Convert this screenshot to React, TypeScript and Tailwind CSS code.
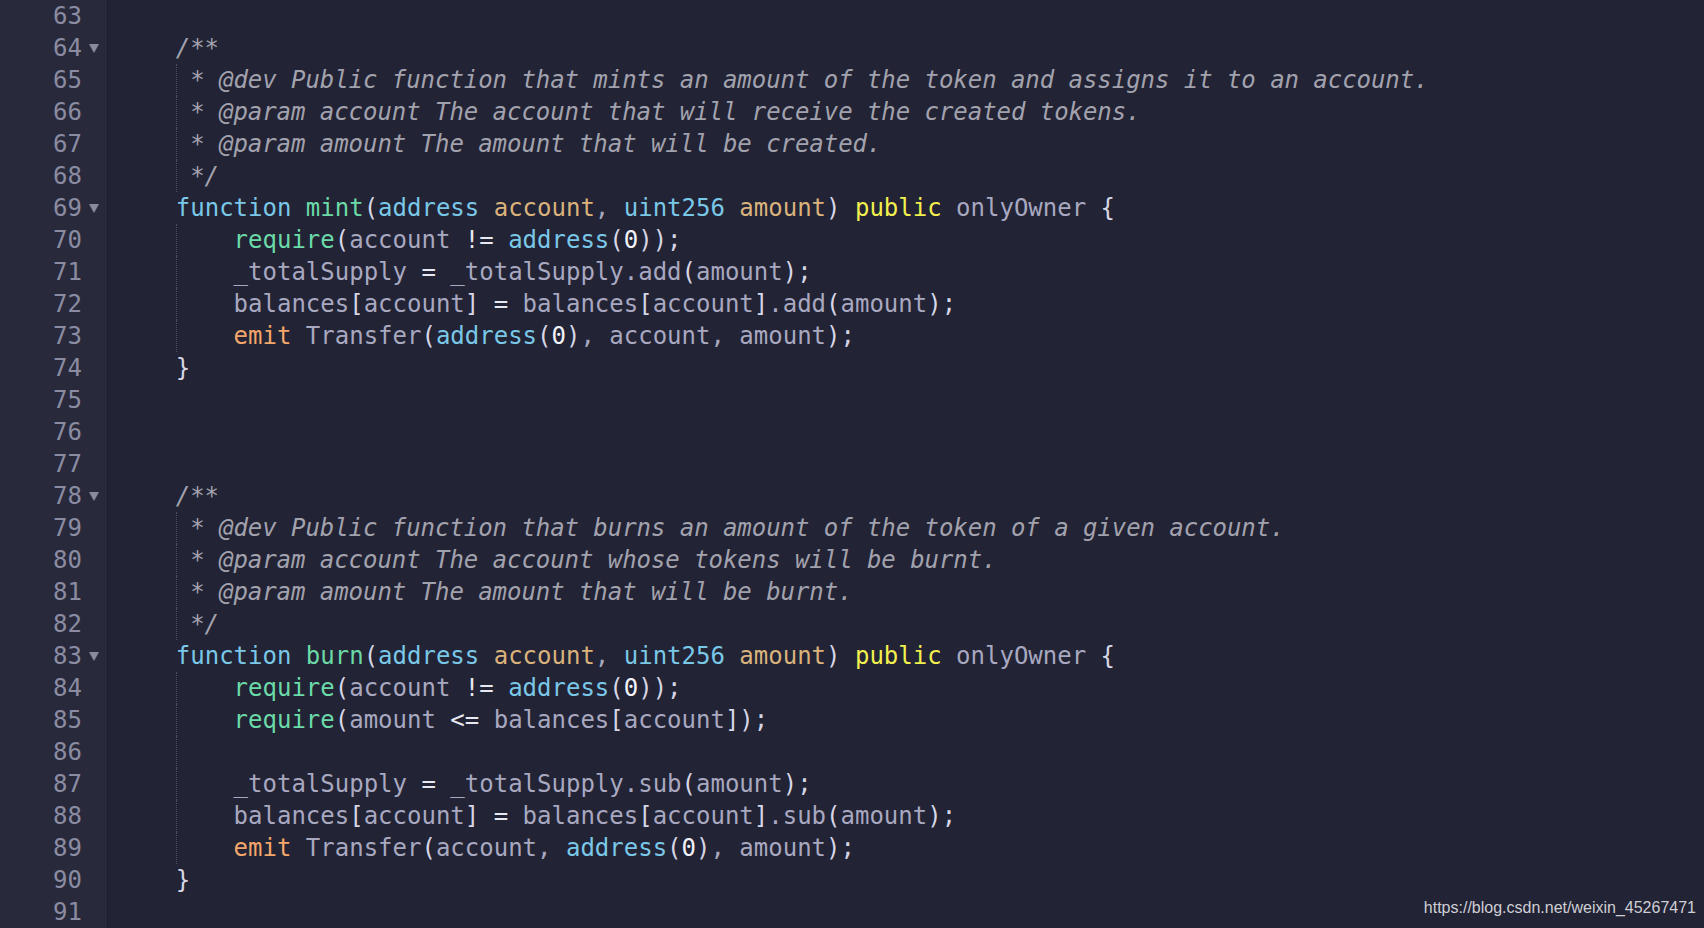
import React from "react";

type Tok = [string, string];

const C = {
  kw: "text-[#7ac8e8]",
  fn: "text-[#6bdaa8]",
  prm: "text-[#dab27c]",
  pub: "text-[#f2f04e]",
  id: "text-[#a8a8c0]",
  pn: "text-[#d6d6e6]",
  op: "text-[#e8e8f2]",
  num: "text-[#f2f2fa]",
  emit: "text-[#f3a66a]",
  cm: "text-[#a2a2ae] italic tracking-[-0.05px]",
};

const comment = (s: string): Tok[] => [[s, C.cm]];

const lines: { n: number; fold?: boolean; guide?: boolean; toks: Tok[] }[] = [
  { n: 63, toks: [] },
  { n: 64, fold: true, toks: comment("/**") },
  { n: 65, guide: true, toks: comment(" * @dev Public function that mints an amount of the token and assigns it to an account.") },
  { n: 66, guide: true, toks: comment(" * @param account The account that will receive the created tokens.") },
  { n: 67, guide: true, toks: comment(" * @param amount The amount that will be created.") },
  { n: 68, guide: true, toks: comment(" */") },
  {
    n: 69,
    fold: true,
    toks: [
      ["function ", C.kw], ["mint", C.fn], ["(", C.pn], ["address ", C.kw], ["account", C.prm], [", ", C.id],
      ["uint256 ", C.kw], ["amount", C.prm], [") ", C.pn], ["public ", C.pub], ["onlyOwner ", C.id], ["{", C.pn],
    ],
  },
  {
    n: 70,
    guide: true,
    toks: [["    ", ""], ["require", C.fn], ["(", C.pn], ["account ", C.id], ["!= ", C.op], ["address", C.kw], ["(", C.pn], ["0", C.num], ["));", C.pn]],
  },
  {
    n: 71,
    guide: true,
    toks: [["    ", ""], ["_totalSupply ", C.id], ["= ", C.op], ["_totalSupply.add", C.id], ["(", C.pn], ["amount", C.id], [");", C.pn]],
  },
  {
    n: 72,
    guide: true,
    toks: [
      ["    ", ""], ["balances", C.id], ["[", C.pn], ["account", C.id], ["] ", C.pn], ["= ", C.op], ["balances", C.id], ["[", C.pn],
      ["account", C.id], ["]", C.pn], [".add", C.id], ["(", C.pn], ["amount", C.id], [");", C.pn],
    ],
  },
  {
    n: 73,
    guide: true,
    toks: [
      ["    ", ""], ["emit ", C.emit], ["Transfer", C.id], ["(", C.pn], ["address", C.kw], ["(", C.pn], ["0", C.num], [")", C.pn],
      [", account, amount", C.id], [");", C.pn],
    ],
  },
  { n: 74, toks: [["}", C.pn]] },
  { n: 75, toks: [] },
  { n: 76, toks: [] },
  { n: 77, toks: [] },
  { n: 78, fold: true, toks: comment("/**") },
  { n: 79, guide: true, toks: comment(" * @dev Public function that burns an amount of the token of a given account.") },
  { n: 80, guide: true, toks: comment(" * @param account The account whose tokens will be burnt.") },
  { n: 81, guide: true, toks: comment(" * @param amount The amount that will be burnt.") },
  { n: 82, guide: true, toks: comment(" */") },
  {
    n: 83,
    fold: true,
    toks: [
      ["function ", C.kw], ["burn", C.fn], ["(", C.pn], ["address ", C.kw], ["account", C.prm], [", ", C.id],
      ["uint256 ", C.kw], ["amount", C.prm], [") ", C.pn], ["public ", C.pub], ["onlyOwner ", C.id], ["{", C.pn],
    ],
  },
  {
    n: 84,
    guide: true,
    toks: [["    ", ""], ["require", C.fn], ["(", C.pn], ["account ", C.id], ["!= ", C.op], ["address", C.kw], ["(", C.pn], ["0", C.num], ["));", C.pn]],
  },
  {
    n: 85,
    guide: true,
    toks: [["    ", ""], ["require", C.fn], ["(", C.pn], ["amount ", C.id], ["<= ", C.op], ["balances", C.id], ["[", C.pn], ["account", C.id], ["]);", C.pn]],
  },
  { n: 86, guide: true, toks: [] },
  {
    n: 87,
    guide: true,
    toks: [["    ", ""], ["_totalSupply ", C.id], ["= ", C.op], ["_totalSupply.sub", C.id], ["(", C.pn], ["amount", C.id], [");", C.pn]],
  },
  {
    n: 88,
    guide: true,
    toks: [
      ["    ", ""], ["balances", C.id], ["[", C.pn], ["account", C.id], ["] ", C.pn], ["= ", C.op], ["balances", C.id], ["[", C.pn],
      ["account", C.id], ["]", C.pn], [".sub", C.id], ["(", C.pn], ["amount", C.id], [");", C.pn],
    ],
  },
  {
    n: 89,
    guide: true,
    toks: [
      ["    ", ""], ["emit ", C.emit], ["Transfer", C.id], ["(", C.pn], ["account, ", C.id], ["address", C.kw], ["(", C.pn], ["0", C.num],
      [")", C.pn], [", amount", C.id], [");", C.pn],
    ],
  },
  { n: 90, toks: [["}", C.pn]] },
  { n: 91, toks: [] },
];

const FoldArrow = () => (
  <svg width="10" height="9" viewBox="0 0 10 9" className="ml-[7px]">
    <path d="M0 0 H10 L5 9 Z" fill="#8a8a9e" />
  </svg>
);

export default function App() {
  return (
    <div
      className="w-[1704px] h-[928px] overflow-hidden bg-[#222334] flex relative text-[24px] leading-[32px]"
      style={{ fontFamily: '"DejaVu Sans Mono", "Liberation Mono", monospace' }}
    >
      <div className="w-[108px] shrink-0 bg-[#282a3c] border-r border-[#1c1d2a] flex flex-col">
        {lines.map((l) => (
          <div key={l.n} className="h-[32px] flex items-center">
            <span className="w-[82px] text-right text-[#8b8ca2]">{l.n}</span>
            {l.fold && <FoldArrow />}
          </div>
        ))}
      </div>
      <div className="flex-1 pl-[10px] flex flex-col">
        {lines.map((l) => (
          <div key={l.n} className="h-[32px] flex whitespace-pre">
            <span className="inline-block w-[57.8px] h-[32px]" />
            {l.guide && <span className="h-[32px] w-0 -mr-px border-l border-dotted border-[#4e4f62]" />}
            {l.toks.map((t, i) => (
              <span key={i} className={t[1]}>
                {t[0]}
              </span>
            ))}
          </div>
        ))}
      </div>
      <div
        className="absolute right-[8px] bottom-[10px] text-[16px] leading-[20px] text-[#cfcfd6]"
        style={{ fontFamily: '"Liberation Sans", Arial, sans-serif' }}
      >
        https://blog.csdn.net/weixin_45267471
      </div>
    </div>
  );
}
